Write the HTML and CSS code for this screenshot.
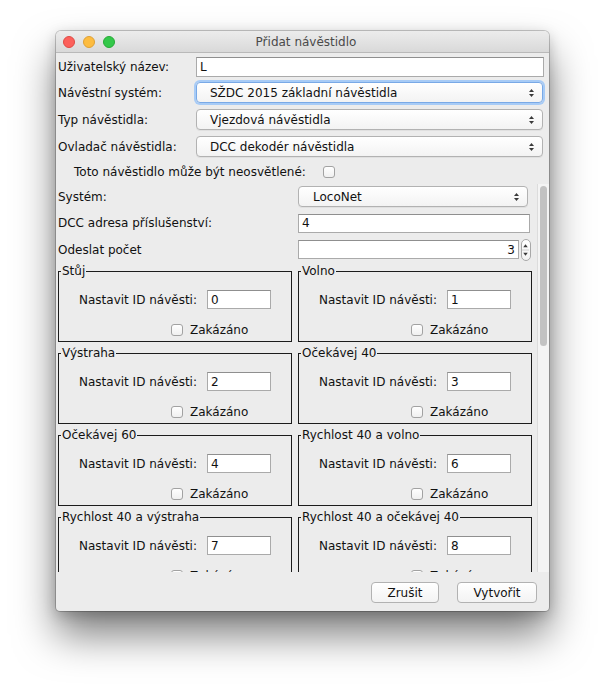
FILE: index.html
```html
<!DOCTYPE html>
<html>
<head>
  <meta charset="utf-8">
  <title>Přidat návěstidlo</title>
  <link rel="stylesheet" href="styles.css">
</head>
<body>
  <div class="window">
    <div class="titlebar">
      <div class="lights">
        <span class="light close"></span>
        <span class="light minimize"></span>
        <span class="light zoom"></span>
      </div>
      <div class="title">Přidat návěstidlo</div>
    </div>

    <div class="content">
      <div class="form">
        <div class="row short">
          <label class="label">Uživatelský název:</label>
          <input class="field" type="text" value="L">
        </div>
        <div class="row">
          <label class="label">Návěstní systém:</label>
          <div class="combo focused">
            <span>SŽDC 2015 základní návěstidla</span>
            <svg class="arrows" width="7" height="10" viewBox="0 0 7 10"><polygon points="1,4 3.5,1 6,4"/><polygon points="1,6 3.5,9 6,6"/></svg>
          </div>
        </div>
        <div class="row">
          <label class="label">Typ návěstidla:</label>
          <div class="combo">
            <span>Vjezdová návěstidla</span>
            <svg class="arrows" width="7" height="10" viewBox="0 0 7 10"><polygon points="1,4 3.5,1 6,4"/><polygon points="1,6 3.5,9 6,6"/></svg>
          </div>
        </div>
        <div class="row">
          <label class="label">Ovladač návěstidla:</label>
          <div class="combo">
            <span>DCC dekodér návěstidla</span>
            <svg class="arrows" width="7" height="10" viewBox="0 0 7 10"><polygon points="1,4 3.5,1 6,4"/><polygon points="1,6 3.5,9 6,6"/></svg>
          </div>
        </div>
        <div class="check-row">
          <span>Toto návěstidlo může být neosvětlené:</span>
          <span class="checkbox"></span>
        </div>
      </div>

      <div class="scroll">
        <div class="scroll-body">
          <div class="srow">
            <label class="label">Systém:</label>
            <div class="combo small">
              <span>LocoNet</span>
              <svg class="arrows" width="7" height="10" viewBox="0 0 7 10"><polygon points="1,4 3.5,1 6,4"/><polygon points="1,6 3.5,9 6,6"/></svg>
            </div>
          </div>
          <div class="srow tall">
            <label class="label">DCC adresa příslušenství:</label>
            <input class="field address" type="text" value="4">
          </div>
          <div class="srow">
            <label class="label">Odeslat počet</label>
            <div class="spinner">
              <input class="field count" type="text" value="3">
              <div class="spin-buttons">
                <svg width="10" height="22" viewBox="0 0 10 22"><polygon points="2.5,8 5,4.5 7.5,8"/><line x1="1" y1="11" x2="9" y2="11"/><polygon points="2.5,14 5,17.5 7.5,14"/></svg>
              </div>
            </div>
          </div>

          <div class="groups">
            <fieldset class="group">
              <legend>Stůj</legend>
              <div class="id-row"><span>Nastavit ID návěsti:</span><input class="field id" type="text" value="0"></div>
              <div class="disable-row"><span class="checkbox"></span><span>Zakázáno</span></div>
            </fieldset>
            <fieldset class="group">
              <legend>Volno</legend>
              <div class="id-row"><span>Nastavit ID návěsti:</span><input class="field id" type="text" value="1"></div>
              <div class="disable-row"><span class="checkbox"></span><span>Zakázáno</span></div>
            </fieldset>
            <fieldset class="group">
              <legend>Výstraha</legend>
              <div class="id-row"><span>Nastavit ID návěsti:</span><input class="field id" type="text" value="2"></div>
              <div class="disable-row"><span class="checkbox"></span><span>Zakázáno</span></div>
            </fieldset>
            <fieldset class="group">
              <legend>Očekávej 40</legend>
              <div class="id-row"><span>Nastavit ID návěsti:</span><input class="field id" type="text" value="3"></div>
              <div class="disable-row"><span class="checkbox"></span><span>Zakázáno</span></div>
            </fieldset>
            <fieldset class="group">
              <legend>Očekávej 60</legend>
              <div class="id-row"><span>Nastavit ID návěsti:</span><input class="field id" type="text" value="4"></div>
              <div class="disable-row"><span class="checkbox"></span><span>Zakázáno</span></div>
            </fieldset>
            <fieldset class="group">
              <legend>Rychlost 40 a volno</legend>
              <div class="id-row"><span>Nastavit ID návěsti:</span><input class="field id" type="text" value="6"></div>
              <div class="disable-row"><span class="checkbox"></span><span>Zakázáno</span></div>
            </fieldset>
            <fieldset class="group">
              <legend>Rychlost 40 a výstraha</legend>
              <div class="id-row"><span>Nastavit ID návěsti:</span><input class="field id" type="text" value="7"></div>
              <div class="disable-row"><span class="checkbox"></span><span>Zakázáno</span></div>
            </fieldset>
            <fieldset class="group">
              <legend>Rychlost 40 a očekávej 40</legend>
              <div class="id-row"><span>Nastavit ID návěsti:</span><input class="field id" type="text" value="8"></div>
              <div class="disable-row"><span class="checkbox"></span><span>Zakázáno</span></div>
            </fieldset>
          </div>
        </div>
        <div class="scrollbar"><div class="thumb"></div></div>
      </div>

      <div class="buttons">
        <button class="button cancel">Zrušit</button>
        <button class="button create">Vytvořit</button>
      </div>
    </div>
  </div>
</body>
</html>
```

FILE: styles.css
```css
:root {
  --window-bg: #ececec;
  --text-color: #111111;
  --field-border: #aaaaaa;
  --control-border: #b2b2b2;
  --group-border: #1c1c1c;
}

html {
  background: #ffffff;
}

body {
  margin: 0;
  min-height: 692px;
  padding-top: 31px;
  box-sizing: border-box;
  font-family: "DejaVu Sans", "Noto Sans", sans-serif;
  font-size: 12px;
  color: var(--text-color);
}

.window {
  width: 493px;
  height: 580px;
  margin-left: 56px;
  background: var(--window-bg);
  border-radius: 5px 5px 4px 4px;
  box-shadow: 0 0 0 1px rgba(0, 0, 0, 0.2), 0 24px 40px rgba(0, 0, 0, 0.5), 0 4px 14px rgba(0, 0, 0, 0.2);
  display: flex;
  flex-direction: column;
  overflow: hidden;
}

/* title bar */

.titlebar {
  height: 21px;
  border-bottom: 1px solid #b9b9b9;
  background: linear-gradient(#ececec, #d9d9d9);
  display: flex;
  align-items: center;
}

.lights {
  display: flex;
  gap: 8px;
  padding-left: 7px;
}

.light {
  width: 12px;
  height: 12px;
  border-radius: 50%;
  box-sizing: border-box;
}

.light.close {
  background: #fc605b;
  border: 1px solid #de4a44;
}

.light.minimize {
  background: #fdbc40;
  border: 1px solid #dea035;
}

.light.zoom {
  background: #34c84a;
  border: 1px solid #27aa37;
}

.title {
  flex: 1;
  text-align: center;
  margin-right: 52px;
  font-size: 12px;
  color: #4a4a4a;
}

/* content */

.content {
  flex: 1;
  display: flex;
  flex-direction: column;
}

.form {
  padding: 2px 5px 0 2px;
}

.row {
  height: 27px;
  display: grid;
  grid-template-columns: 138px 1fr;
  align-items: center;
}

.row.short {
  height: 24px;
}

.label {
  white-space: nowrap;
}

.field {
  box-sizing: border-box;
  height: 20px;
  margin: 0;
  padding: 0 3px;
  border: 1px solid var(--field-border);
  border-top-color: #8f8f8f;
  border-radius: 0;
  background: #ffffff;
  font-family: inherit;
  font-size: 12px;
  color: var(--text-color);
  outline: none;
}

.combo {
  box-sizing: border-box;
  height: 21px;
  margin-right: 1px;
  padding: 0 7px 0 13px;
  display: flex;
  align-items: center;
  justify-content: space-between;
  border: 1px solid var(--control-border);
  border-radius: 4px;
  background: linear-gradient(#ffffff, #f3f3f3);
  box-shadow: 0 1px 0 rgba(0, 0, 0, 0.05);
}

.combo.focused {
  border-color: #79a9e6;
  box-shadow: 0 0 0 2px #a7cbf6;
}

.arrows polygon {
  fill: #3a3a3a;
}

.check-row {
  height: 24px;
  display: flex;
  align-items: center;
  gap: 17px;
  padding-left: 16px;
}

.checkbox {
  box-sizing: border-box;
  width: 12px;
  height: 12px;
  border: 1px solid #a2a2a2;
  border-radius: 3px;
  background: linear-gradient(#ffffff, #f0f0f0);
  flex: none;
}

/* scroll area */

.scroll {
  height: 388px;
  display: flex;
}

.scroll-body {
  flex: 1;
  overflow: hidden;
  padding-left: 2px;
}

.srow {
  height: 25px;
  display: grid;
  grid-template-columns: 240px auto;
  align-items: center;
}

.srow.tall {
  height: 28px;
}

.combo.small {
  width: 230px;
  padding-left: 14px;
}

.field.address {
  width: 232px;
  height: 19px;
}

.spinner {
  display: flex;
  align-items: center;
  gap: 2px;
}

.field.count {
  width: 221px;
  height: 19px;
  text-align: right;
}

.spin-buttons {
  box-sizing: border-box;
  width: 10px;
  height: 22px;
  border: 1px solid #a8a8a8;
  border-radius: 5px;
  background: linear-gradient(#ffffff, #f2f2f2);
  display: flex;
}

.spin-buttons svg {
  margin-left: -1px;
  margin-top: -1px;
}

.spin-buttons polygon {
  fill: #3a3a3a;
}

.spin-buttons line {
  stroke: #c8c8c8;
  stroke-width: 1;
}

.groups {
  margin-top: 2px;
  display: grid;
  grid-template-columns: 234px 234px;
  column-gap: 6px;
  row-gap: 4px;
}

.group {
  margin: 0;
  padding: 0 0 1px 0;
  border: 1px solid var(--group-border);
  min-width: 0;
}

.group legend {
  margin-left: 2px;
  padding: 0 1px;
  line-height: 15px;
}

.id-row {
  margin-top: 11px;
  display: flex;
  align-items: center;
  justify-content: center;
  gap: 10px;
}

.field.id {
  width: 64px;
  height: 19px;
}

.disable-row {
  margin-top: 11px;
  height: 20px;
  display: flex;
  align-items: center;
  gap: 7px;
  padding-left: 112px;
}

.scrollbar {
  width: 11px;
  border-left: 1px solid #dcdcdc;
  background: #f4f4f4;
  position: relative;
}

.thumb {
  position: absolute;
  top: 2px;
  left: 2px;
  width: 7px;
  height: 160px;
  border-radius: 4px;
  background: #c2c2c2;
}

/* buttons */

.buttons {
  flex: 1;
  display: flex;
  justify-content: flex-end;
  align-items: flex-start;
  gap: 18px;
  padding: 10px 12px 0 0;
}

.button {
  box-sizing: border-box;
  height: 21px;
  padding: 0;
  border: 1px solid var(--control-border);
  border-radius: 4px;
  background: linear-gradient(#ffffff, #f3f3f3);
  font-family: inherit;
  font-size: 12px;
  color: var(--text-color);
}

.button.cancel {
  width: 68px;
}

.button.create {
  width: 80px;
}
```
